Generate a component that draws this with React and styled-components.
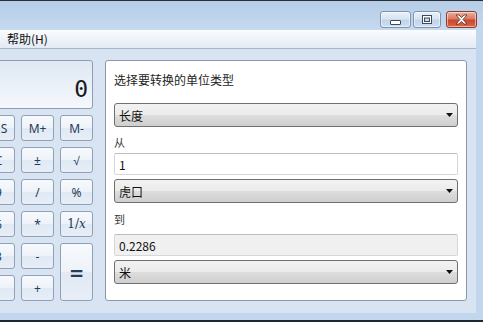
import React from "react";
import styled, { createGlobalStyle } from "styled-components";

const GlobalStyle = createGlobalStyle`
    html, body {
        margin: 0;
        padding: 0;
        background: #1d2733;
    }
    body {
        font-family: "Noto Sans CJK SC", "Noto Sans", sans-serif;
    }
`;

const Screen = styled.div`
    width: 483px;
    height: 322px;
    overflow: hidden;
    display: flex;
    flex-direction: column;
    border-top: 1px solid #2d2d2d;
    box-sizing: border-box;
    background: #c2d6ee;
`;

const TitleBar = styled.div`
    height: 29px;
    flex-shrink: 0;
    display: flex;
    justify-content: flex-end;
    align-items: flex-start;
    padding: 10px 6px 0 0;
    box-sizing: border-box;
    background: linear-gradient(to bottom, #b5cde8, #c6d9ef);
`;

const CaptionGroup = styled.div`
    display: flex;
    gap: 2px;
`;

const CapButton = styled.div`
    width: ${(p) => p.$w}px;
    height: 17px;
    margin-left: ${(p) => (p.$close ? 3 : 0)}px;
    box-sizing: border-box;
    border: 1px solid ${(p) => (p.$close ? "#8e3b2c" : "#7d93b0")};
    border-radius: 3px;
    display: flex;
    align-items: center;
    justify-content: center;
    background: ${(p) =>
        p.$close
            ? "linear-gradient(to bottom, #eab0a0 0%, #dc7a62 45%, #c9472e 55%, #d8664a 100%)"
            : "linear-gradient(to bottom, #eaf1f9 0%, #d7e4f2 45%, #c2d4ea 55%, #d0def0 100%)"};
    box-shadow: inset 0 0 0 1px rgba(255, 255, 255, 0.5);
`;

const Frame = styled.div`
    flex: 1;
    display: flex;
    padding: 0 7px 7px 0;
    border-bottom: 2px solid #1d2733;
`;

const Client = styled.div`
    flex: 1;
    display: flex;
    flex-direction: column;
    overflow: hidden;
`;

const MenuBar = styled.div`
    height: 19px;
    flex-shrink: 0;
    box-sizing: border-box;
    display: flex;
    align-items: center;
    padding-left: 7px;
    background: linear-gradient(to bottom, #fbfcfe, #e2eaf5);
    border-bottom: 1px solid #a6b5c9;
`;

const MenuItem = styled.span`
    font-size: 12px;
    line-height: 16px;
    color: #111;
`;

const Body = styled.div`
    flex: 1;
    display: flex;
    gap: 12px;
    padding: 11px 9px 0 0;
    background: #d9e4f2;
`;

const Calc = styled.div`
    width: 189px;
    margin-left: -96px;
    flex-shrink: 0;
    display: flex;
    flex-direction: column;
    gap: 6px;
`;

const Display = styled.div`
    height: 49px;
    box-sizing: border-box;
    border: 1px solid #8e9db3;
    border-radius: 3px;
    background: linear-gradient(to bottom, #dfe8f3, #f5f8fc);
    display: flex;
    align-items: flex-end;
    justify-content: flex-end;
    padding: 0 4px 8px 0;
    font-family: "DejaVu Sans Mono", monospace;
    font-size: 23px;
    line-height: 22px;
    color: #1a1a1a;
`;

const Keys = styled.div`
    display: grid;
    grid-template-columns: repeat(5, 33px);
    grid-auto-rows: 26px;
    gap: 6px;
`;

const Key = styled.div`
    grid-column: span ${(p) => p.$cols || 1};
    grid-row: span ${(p) => p.$rows || 1};
    box-sizing: border-box;
    border: 1px solid #8fa0b7;
    border-radius: 3px;
    background: linear-gradient(to bottom, #f7fafd 0%, #eef3f9 49%, #e0e9f4 50%, #e7eef7 100%);
    display: flex;
    align-items: center;
    justify-content: center;
    font-family: "Noto Sans", sans-serif;
    font-size: ${(p) => p.$size || 12}px;
    font-weight: ${(p) => p.$weight || 400};
    color: #263c58;
`;

const SerifKey = styled.span`
    font-family: "DejaVu Serif", serif;
    font-size: 12px;
    i {
        font-style: italic;
    }
`;

const Converter = styled.div`
    flex: 1;
    height: 241px;
    box-sizing: border-box;
    background: #fff;
    border: 1px solid #8c98aa;
    border-radius: 3px;
    padding: 0 8px 16px;
    display: flex;
    flex-direction: column;
`;

const Heading = styled.div`
    margin-top: 11px;
    font-size: 12px;
    line-height: 16px;
    color: #1e1e1e;
`;

const Label = styled.div`
    margin: ${(p) => p.$top}px 0 ${(p) => p.$bottom}px;
    font-size: 11px;
    line-height: 16px;
    color: #333;
`;

const Combo = styled.div`
    height: 24px;
    margin-top: ${(p) => p.$top}px;
    box-sizing: border-box;
    border: 1px solid #707070;
    border-radius: 3px;
    background: linear-gradient(to bottom, #f2f2f2 0%, #ebebeb 50%, #dddddd 51%, #cfcfcf 100%);
    display: flex;
    align-items: center;
    justify-content: space-between;
    padding: 0 4px 0 4px;
    font-size: 12px;
    color: #111;
`;

const Field = styled.div`
    height: 22px;
    box-sizing: border-box;
    border: 1px solid #d4d7dc;
    border-top-color: #b9bcc2;
    border-radius: 2px;
    background: ${(p) => (p.$readonly ? "#f0f0f0" : "#fff")};
    display: flex;
    align-items: center;
    padding: 0 4px;
    font-size: 12px;
    color: #111;
`;

function Arrow() {
    return (
        <svg width="7" height="4" viewBox="0 0 7 4">
            <path d="M0 0h7L3.5 4z" fill="#111" />
        </svg>
    );
}

function MinIcon() {
    return (
        <svg width="11" height="6" viewBox="0 0 11 6" style={{ marginTop: 6 }}>
            <rect x="0.5" y="0.5" width="10" height="4" rx="0.5" fill="#fff" stroke="#3b4a5f" />
        </svg>
    );
}

function MaxIcon() {
    return (
        <svg width="10" height="9" viewBox="0 0 10 9">
            <rect x="0.5" y="0.5" width="9" height="8" fill="#fff" stroke="#3b4a5f" />
            <rect x="2.5" y="3" width="5" height="3.5" fill="#ced9e7" stroke="#3b4a5f" />
        </svg>
    );
}

function CloseIcon() {
    return (
        <svg width="13" height="11" viewBox="0 0 13 11">
            <path
                d="M1 1h3l2.5 2.6L9 1h3L8 5.5 12 10H9L6.5 7.4 4 10H1l4-4.5z"
                fill="#fff"
                stroke="#5a2a22"
                strokeWidth="0.8"
                strokeLinejoin="round"
            />
        </svg>
    );
}

const keys = [
    "MC", "MR", "MS", "M+", "M-",
    "←", "CE", "C", "±", "√",
    "7", "8", "9", "/", "%",
    "4", "5", "6", "*", "1/x",
    "1", "2", "3", "-", "=",
    "0", ".", "+",
];

function KeyButton({ label }) {
    if (label === "=") {
        return <Key $rows={2} $size={24} $weight={600}>=</Key>;
    }
    if (label === "0") {
        return <Key $cols={2}>0</Key>;
    }
    if (label === "1/x") {
        return (
            <Key>
                <SerifKey>1/<i>x</i></SerifKey>
            </Key>
        );
    }
    return <Key>{label}</Key>;
}

export default function App() {
    return (
        <>
            <GlobalStyle />
            <Screen>
                <TitleBar>
                    <CaptionGroup>
                        <CapButton $w={31}><MinIcon /></CapButton>
                        <CapButton $w={28}><MaxIcon /></CapButton>
                        <CapButton $w={31} $close><CloseIcon /></CapButton>
                    </CaptionGroup>
                </TitleBar>
                <Frame>
                    <Client>
                        <MenuBar>
                            <MenuItem>帮助(H)</MenuItem>
                        </MenuBar>
                        <Body>
                            <Calc>
                                <Display>0</Display>
                                <Keys>
                                    {keys.map((k) => (
                                        <KeyButton key={k} label={k} />
                                    ))}
                                </Keys>
                            </Calc>
                            <Converter>
                                <Heading>选择要转换的单位类型</Heading>
                                <Combo $top={15}>
                                    <span>长度</span>
                                    <Arrow />
                                </Combo>
                                <Label $top={7} $bottom={3}>从</Label>
                                <Field>1</Field>
                                <Combo $top={4}>
                                    <span>虎口</span>
                                    <Arrow />
                                </Combo>
                                <Label $top={8} $bottom={7}>到</Label>
                                <Field $readonly>0.2286</Field>
                                <Combo $top={4}>
                                    <span>米</span>
                                    <Arrow />
                                </Combo>
                            </Converter>
                        </Body>
                    </Client>
                </Frame>
            </Screen>
        </>
    );
}
